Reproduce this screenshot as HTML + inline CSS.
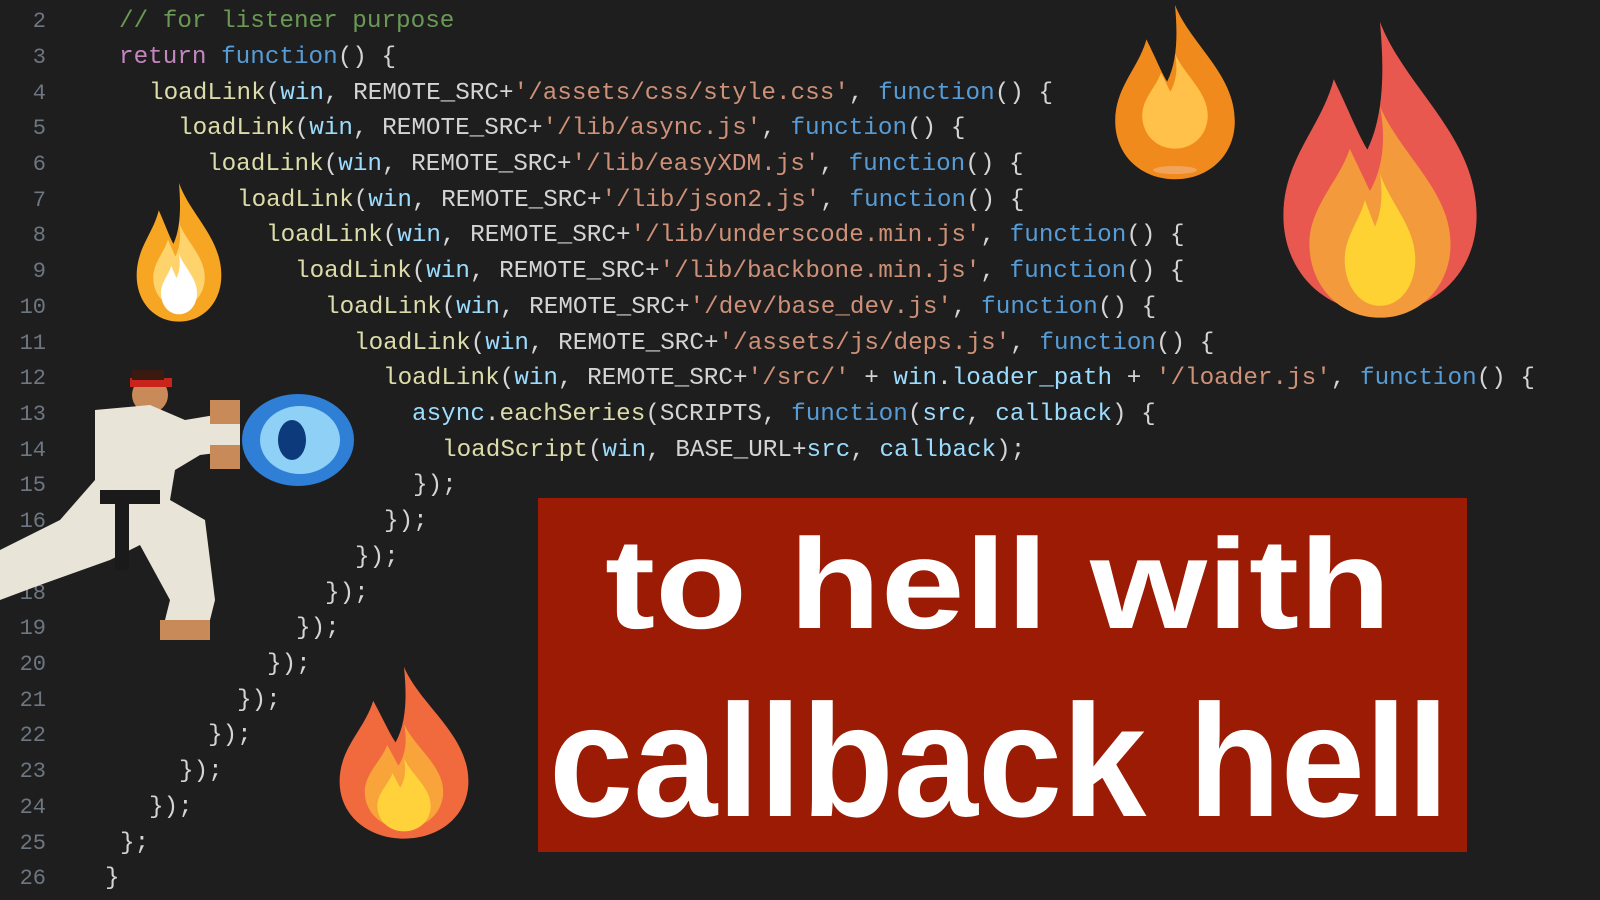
<!DOCTYPE html>
<html><head><meta charset="utf-8"><style>
body{margin:0;width:1600px;height:900px;background:#1e1e1e;overflow:hidden;position:relative;font-family:"Liberation Mono",monospace}
.l{position:absolute;white-space:pre;font-size:24.3px;line-height:36px;color:#d4d4d4;letter-spacing:0}
.n{position:absolute;width:46px;text-align:right;left:0;font-size:22px;line-height:36px;color:#6e7681;font-family:"Liberation Mono",monospace}
.c{color:#6a9955}.r{color:#c586c0}.f{color:#569cd6}.y{color:#dcdcaa}.v{color:#9cdcfe}.s{color:#ce9178}
svg{position:absolute}
</style></head><body>
<div class="n" style="top:4px">2</div><div class="n" style="top:40px">3</div><div class="n" style="top:76px">4</div><div class="n" style="top:111px">5</div><div class="n" style="top:147px">6</div><div class="n" style="top:183px">7</div><div class="n" style="top:218px">8</div><div class="n" style="top:254px">9</div><div class="n" style="top:290px">10</div><div class="n" style="top:326px">11</div><div class="n" style="top:361px">12</div><div class="n" style="top:397px">13</div><div class="n" style="top:433px">14</div><div class="n" style="top:468px">15</div><div class="n" style="top:504px">16</div><div class="n" style="top:540px">17</div><div class="n" style="top:576px">18</div><div class="n" style="top:611px">19</div><div class="n" style="top:647px">20</div><div class="n" style="top:683px">21</div><div class="n" style="top:718px">22</div><div class="n" style="top:754px">23</div><div class="n" style="top:790px">24</div><div class="n" style="top:826px">25</div><div class="n" style="top:861px">26</div>

<div class="l c" style="left:119px;top:4px">// for listener purpose</div>
<div class="l" style="left:119px;top:40px"><span class="r">return</span> <span class="f">function</span>() {</div>
<div class="l" style="left:149px;top:76px"><span class="y">loadLink</span>(<span class="v">win</span>, REMOTE_SRC+<span class="s">'/assets/css/style.css'</span>, <span class="f">function</span>() {</div>
<div class="l" style="left:178px;top:111px"><span class="y">loadLink</span>(<span class="v">win</span>, REMOTE_SRC+<span class="s">'/lib/async.js'</span>, <span class="f">function</span>() {</div>
<div class="l" style="left:207px;top:147px"><span class="y">loadLink</span>(<span class="v">win</span>, REMOTE_SRC+<span class="s">'/lib/easyXDM.js'</span>, <span class="f">function</span>() {</div>
<div class="l" style="left:237px;top:183px"><span class="y">loadLink</span>(<span class="v">win</span>, REMOTE_SRC+<span class="s">'/lib/json2.js'</span>, <span class="f">function</span>() {</div>
<div class="l" style="left:266px;top:218px"><span class="y">loadLink</span>(<span class="v">win</span>, REMOTE_SRC+<span class="s">'/lib/underscode.min.js'</span>, <span class="f">function</span>() {</div>
<div class="l" style="left:295px;top:254px"><span class="y">loadLink</span>(<span class="v">win</span>, REMOTE_SRC+<span class="s">'/lib/backbone.min.js'</span>, <span class="f">function</span>() {</div>
<div class="l" style="left:325px;top:290px"><span class="y">loadLink</span>(<span class="v">win</span>, REMOTE_SRC+<span class="s">'/dev/base_dev.js'</span>, <span class="f">function</span>() {</div>
<div class="l" style="left:354px;top:326px"><span class="y">loadLink</span>(<span class="v">win</span>, REMOTE_SRC+<span class="s">'/assets/js/deps.js'</span>, <span class="f">function</span>() {</div>
<div class="l" style="left:383px;top:361px"><span class="y">loadLink</span>(<span class="v">win</span>, REMOTE_SRC+<span class="s">'/src/'</span> + <span class="v">win</span>.<span class="v">loader_path</span> + <span class="s">'/loader.js'</span>, <span class="f">function</span>() {</div>
<div class="l" style="left:412px;top:397px"><span class="v">async</span>.<span class="y">eachSeries</span>(SCRIPTS, <span class="f">function</span>(<span class="v">src</span>, <span class="v">callback</span>) {</div>
<div class="l" style="left:442px;top:433px"><span class="y">loadScript</span>(<span class="v">win</span>, BASE_URL+<span class="v">src</span>, <span class="v">callback</span>);</div>
<div class="l" style="left:413px;top:468px">});</div>
<div class="l" style="left:384px;top:504px">});</div>
<div class="l" style="left:355px;top:540px">});</div>
<div class="l" style="left:325px;top:576px">});</div>
<div class="l" style="left:296px;top:611px">});</div>
<div class="l" style="left:267px;top:647px">});</div>
<div class="l" style="left:237px;top:683px">});</div>
<div class="l" style="left:208px;top:718px">});</div>
<div class="l" style="left:179px;top:754px">});</div>
<div class="l" style="left:149px;top:790px">});</div>
<div class="l" style="left:120px;top:826px">};</div>
<div class="l" style="left:105px;top:861px">}</div>

<svg width="1600" height="900" viewBox="0 0 1600 900" style="left:0;top:0">
<defs>
<path id="fl" d="M50 0 C62 30 96 52 96 88 C96 114 76 132 50 132 C24 132 4 114 4 88 C4 62 22 48 28 26 C36 42 40 52 44 58 C52 42 52 22 50 0Z"/>
<path id="fi" d="M50 52 C58 70 78 84 78 104 C78 120 66 132 50 132 C34 132 22 120 22 104 C22 90 34 80 38 68 C42 76 44 80 46 84 C52 74 52 62 50 52Z"/>
</defs>
<!-- big right flame -->
<g transform="translate(1275,22) scale(2.1,2.2)"><use href="#fl" fill="#e8584f"/><use href="#fi" fill="#f39a3c" transform="translate(-10,-24) scale(1.2)"/><use href="#fi" fill="#ffd233" transform="translate(20,30) scale(0.6,0.75)"/></g>
<!-- orb flame -->
<g transform="translate(1110,5) scale(1.3,1.32)"><use href="#fl" fill="#f08a1c"/><use href="#fi" fill="#ffc14a" transform="translate(5,-10) scale(0.9)"/></g>
<ellipse cx="1175" cy="170" rx="22" ry="4" fill="#f2a35c"/>
<!-- small left flame -->
<g transform="translate(133,183) scale(0.92,1.05)"><use href="#fl" fill="#f6a623"/><use href="#fi" fill="#ffd36b" transform="translate(0,-14) scale(1)"/><use href="#fi" fill="#fff" transform="translate(15,30) scale(0.7,0.72)"/></g>
<!-- bottom flame -->
<g transform="translate(334,667) scale(1.4,1.3)"><use href="#fl" fill="#f06a3e"/><use href="#fi" fill="#f8a43a" transform="translate(0,-8) scale(1)"/><use href="#fi" fill="#ffd23c" transform="translate(16,34) scale(0.68,0.7)"/></g>
<!-- fireball -->
<ellipse cx="298" cy="440" rx="56" ry="46" fill="#2f7fd6"/>
<ellipse cx="300" cy="440" rx="40" ry="34" fill="#8fd0f7"/>
<ellipse cx="292" cy="440" rx="14" ry="20" fill="#0d3a7a"/>
<!-- ryu -->
<g>
<circle cx="150" cy="395" r="18" fill="#c98a5a"/>
<rect x="130" y="378" width="42" height="9" fill="#c8241c"/>
<rect x="132" y="370" width="32" height="10" fill="#3a1a10"/>
<path d="M95 410 L150 405 L185 420 L215 415 L240 420 L240 450 L200 455 L175 470 L170 500 L205 520 L215 600 L205 640 L160 640 L170 600 L140 545 L110 560 L40 585 L0 600 L0 550 L60 520 L95 480 Z" fill="#e9e4d8"/>
<rect x="100" y="490" width="60" height="14" fill="#1a1a1a"/>
<rect x="115" y="500" width="14" height="70" fill="#1a1a1a"/>
<rect x="210" y="400" width="30" height="24" fill="#c98a5a"/>
<rect x="210" y="445" width="30" height="24" fill="#c98a5a"/>
<rect x="160" y="620" width="50" height="20" fill="#c98a5a"/>
</g>
<!-- banner -->
<rect x="538" y="498" width="929" height="354" fill="#9b1b04"/>
<text x="605" y="628" font-family="Liberation Sans,sans-serif" font-weight="bold" font-size="128" fill="#fff" textLength="786" lengthAdjust="spacingAndGlyphs">to hell with</text>
<text x="549" y="816" font-family="Liberation Sans,sans-serif" font-weight="bold" font-size="160" fill="#fff" textLength="900" lengthAdjust="spacingAndGlyphs">callback hell</text>
</svg>
</body></html>
